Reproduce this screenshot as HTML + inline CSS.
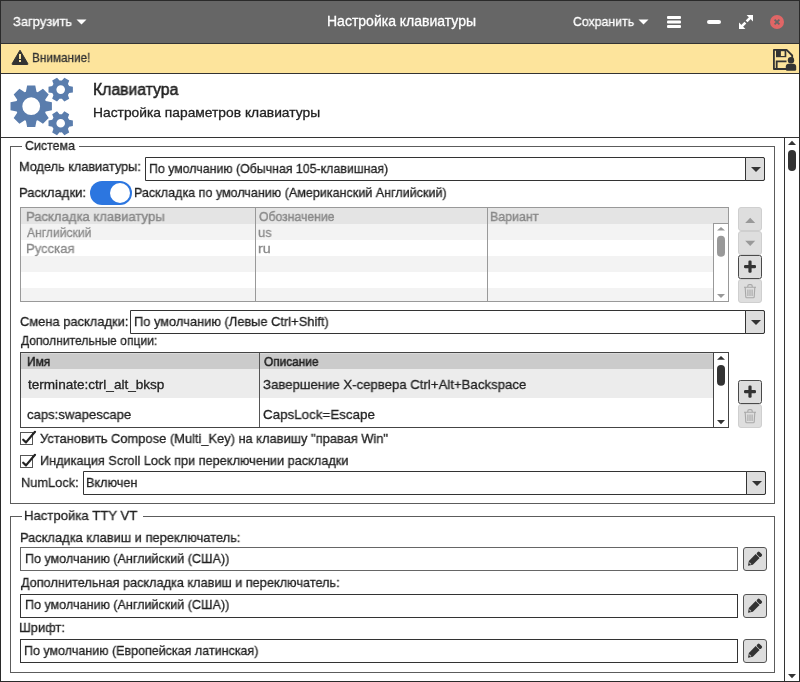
<!DOCTYPE html>
<html><head><meta charset="utf-8"><title>Настройка клавиатуры</title>
<style>
html,body{margin:0;padding:0;}
body{width:800px;height:682px;position:relative;overflow:hidden;background:#fff;font-family:"Liberation Sans",sans-serif;}
body>div,body>svg{position:absolute;}
.t{white-space:pre;line-height:20px;transform-origin:0 0;-webkit-text-stroke:0.3px currentColor;will-change:transform;}
</style></head><body>
<div style="left:0px;top:0px;width:800px;height:43px;background:#666;"></div>
<div style="left:0px;top:43px;width:800px;height:1px;background:#333;"></div>
<div style="left:0px;top:44px;width:800px;height:29px;background:#fde49c;"></div>
<div style="left:0px;top:73px;width:800px;height:1px;background:#333;"></div>
<div style="left:0px;top:137px;width:800px;height:1px;background:#333;"></div>
<svg style="left:0px;top:0px" width="800" height="44" viewBox="0 0 800 44">
<path d="M76.5,19.5h10l-5,5z" fill="#fff"/>
<path d="M638.5,19.5h10l-5,5z" fill="#fff"/>
<rect x="667" y="16" width="14" height="3" rx="1" fill="#fff"/>
<rect x="667" y="20.5" width="14" height="3" rx="1" fill="#fff"/>
<rect x="667" y="25" width="14" height="3" rx="1" fill="#fff"/>
<rect x="707" y="20" width="14" height="4" rx="2" fill="#fff"/>
<path d="M746.6,15H753V21.4Z" fill="#fff"/>
<path d="M739,22.6V29H745.4Z" fill="#fff"/>
<path d="M750.6,17.4L746.6,21.4M741.4,26.6L745.4,22.6" stroke="#fff" stroke-width="2.6"/>
<circle cx="777" cy="22" r="7" fill="#e06666"/>
<path d="M774.6,19.6l4.8,4.8M779.4,19.6l-4.8,4.8" stroke="#666" stroke-width="1.8"/>
</svg>
<svg style="left:0px;top:44px" width="800" height="30" viewBox="0 44 800 30">
<path d="M20,50.2L27.8,63.6Q28.3,64.5 27.3,64.5H12.7Q11.7,64.5 12.2,63.6Z" fill="#333" stroke="#333" stroke-width="1" stroke-linejoin="round"/>
<rect x="19" y="54" width="2" height="5" fill="#fde49c"/>
<rect x="19" y="60" width="2" height="2" fill="#fde49c"/>
<path d="M786,69H773.9V49.9H786.6L792.2,55.5V59" fill="none" stroke="#333" stroke-width="1.8" stroke-linejoin="round"/>
<path d="M776,50h10.3v7.2h-10.3z" fill="#333"/>
<rect x="780.9" y="51.2" width="3.7" height="4.8" fill="#fde49c"/>
<path d="M776.7,69V61.3H786.5" fill="none" stroke="#333" stroke-width="1.8"/>
<circle cx="791" cy="60.3" r="3.2" fill="#333"/>
<path d="M785.8,69.2V66.6Q785.8,63.7 788.8,63.7H793Q796.2,63.7 796.2,66.6V69.2Q796.2,70.7 794.7,70.7H787.3Q785.8,70.7 785.8,69.2Z" fill="#333"/>
</svg>
<svg style="left:0px;top:74px" width="90" height="63" viewBox="0 74 90 63">
<path fill="#5a7dad" fill-rule="evenodd" d="M25.91,91.74L27.13,85.50L35.27,85.50L36.49,91.74A15.4,15.4 0 0,1 37.69,92.23L42.96,88.68L48.72,94.44L45.17,99.71A15.4,15.4 0 0,1 45.66,100.91L51.90,102.13L51.90,110.27L45.66,111.49A15.4,15.4 0 0,1 45.17,112.69L48.72,117.96L42.96,123.72L37.69,120.17A15.4,15.4 0 0,1 36.49,120.66L35.27,126.90L27.13,126.90L25.91,120.66A15.4,15.4 0 0,1 24.71,120.17L19.44,123.72L13.68,117.96L17.23,112.69A15.4,15.4 0 0,1 16.74,111.49L10.50,110.27L10.50,102.13L16.74,100.91A15.4,15.4 0 0,1 17.23,99.71L13.68,94.44L19.44,88.68L24.71,92.23A15.4,15.4 0 0,1 25.91,91.74ZM40.10,106.20A8.9,8.9 0 1,0 22.30,106.20A8.9,8.9 0 1,0 40.10,106.20Z"/>
<path fill="#5a7dad" fill-rule="evenodd" d="M69.10,86.09L72.89,86.82L72.89,92.38L69.10,93.11A9.1,9.1 0 0,1 67.94,95.12L69.20,98.77L64.39,101.54L61.86,98.63A9.1,9.1 0 0,1 59.54,98.63L57.01,101.54L52.20,98.77L53.46,95.12A9.1,9.1 0 0,1 52.30,93.11L48.51,92.38L48.51,86.82L52.30,86.09A9.1,9.1 0 0,1 53.46,84.08L52.20,80.43L57.01,77.66L59.54,80.57A9.1,9.1 0 0,1 61.86,80.57L64.39,77.66L69.20,80.43L67.94,84.08A9.1,9.1 0 0,1 69.10,86.09ZM65.00,89.60A4.3,4.3 0 1,0 56.40,89.60A4.3,4.3 0 1,0 65.00,89.60Z"/>
<path fill="#5a7dad" fill-rule="evenodd" d="M69.10,119.79L72.89,120.52L72.89,126.08L69.10,126.81A9.1,9.1 0 0,1 67.94,128.82L69.20,132.47L64.39,135.24L61.86,132.33A9.1,9.1 0 0,1 59.54,132.33L57.01,135.24L52.20,132.47L53.46,128.82A9.1,9.1 0 0,1 52.30,126.81L48.51,126.08L48.51,120.52L52.30,119.79A9.1,9.1 0 0,1 53.46,117.78L52.20,114.13L57.01,111.36L59.54,114.27A9.1,9.1 0 0,1 61.86,114.27L64.39,111.36L69.20,114.13L67.94,117.78A9.1,9.1 0 0,1 69.10,119.79ZM65.00,123.30A4.3,4.3 0 1,0 56.40,123.30A4.3,4.3 0 1,0 65.00,123.30Z"/>
</svg>
<div style="left:784px;top:138px;width:1px;height:543px;background:#333;"></div>
<svg style="left:784px;top:138px" width="16" height="544" viewBox="784 138 16 544">
<path d="M788,145h8l-4,-4.2z" fill="#333"/>
<rect x="788" y="150" width="8" height="21" rx="4" fill="#333"/>
<path d="M788,674h8l-4,4.2z" fill="#333"/>
</svg>
<div style="left:10px;top:146px;width:1px;height:358px;background:#5c5c5c;"></div>
<div style="left:774px;top:146px;width:1px;height:358px;background:#5c5c5c;"></div>
<div style="left:10px;top:503px;width:765px;height:1px;background:#5c5c5c;"></div>
<div style="left:10px;top:146px;width:12px;height:1px;background:#5c5c5c;"></div>
<div style="left:79px;top:146px;width:696px;height:1px;background:#5c5c5c;"></div>
<div style="left:10px;top:516px;width:1px;height:157px;background:#5c5c5c;"></div>
<div style="left:774px;top:516px;width:1px;height:157px;background:#5c5c5c;"></div>
<div style="left:10px;top:672px;width:765px;height:1px;background:#5c5c5c;"></div>
<div style="left:10px;top:516px;width:12px;height:1px;background:#5c5c5c;"></div>
<div style="left:143px;top:516px;width:632px;height:1px;background:#5c5c5c;"></div>
<div style="left:145px;top:157px;width:620px;height:24px;box-sizing:border-box;border:1px solid #333;background:#fff;border-radius:0 2px 2px 0;"></div>
<div style="left:745px;top:157px;width:20px;height:24px;box-sizing:border-box;border:1px solid #333;background:#ddd;border-radius:0 2px 2px 0;"></div>
<svg style="left:751px;top:167px" width="10" height="5" viewBox="0 0 10 5"><path d="M0,0h10l-5,5z" fill="#333"/></svg>
<div style="left:130px;top:310px;width:635px;height:24px;box-sizing:border-box;border:1px solid #333;background:#fff;border-radius:0 2px 2px 0;"></div>
<div style="left:745px;top:310px;width:20px;height:24px;box-sizing:border-box;border:1px solid #333;background:#ddd;border-radius:0 2px 2px 0;"></div>
<svg style="left:751px;top:320px" width="10" height="5" viewBox="0 0 10 5"><path d="M0,0h10l-5,5z" fill="#333"/></svg>
<div style="left:83px;top:471px;width:683px;height:24px;box-sizing:border-box;border:1px solid #333;background:#fff;border-radius:0 2px 2px 0;"></div>
<div style="left:746px;top:471px;width:20px;height:24px;box-sizing:border-box;border:1px solid #333;background:#ddd;border-radius:0 2px 2px 0;"></div>
<svg style="left:752px;top:481px" width="10" height="5" viewBox="0 0 10 5"><path d="M0,0h10l-5,5z" fill="#333"/></svg>
<div style="left:90px;top:181px;width:42px;height:24px;background:#2c76e0;border-radius:12px;"></div>
<div style="left:110px;top:183px;width:20px;height:20px;background:#fff;border-radius:10px;"></div>
<div style="left:20px;top:207px;width:709px;height:95px;box-sizing:border-box;border:1px solid #999;background:#fff;"></div>
<div style="left:21px;top:208px;width:692px;height:16px;background:#e4e4e4;"></div>
<div style="left:21px;top:224px;width:692px;height:16px;background:#f3f3f3;"></div>
<div style="left:21px;top:256px;width:692px;height:16px;background:#f3f3f3;"></div>
<div style="left:21px;top:288px;width:692px;height:13px;background:#f3f3f3;"></div>
<div style="left:713px;top:208px;width:15px;height:16px;background:#e4e4e4;"></div>
<div style="left:255px;top:208px;width:1px;height:93px;background:#999;"></div>
<div style="left:487px;top:208px;width:1px;height:93px;background:#999;"></div>
<div style="left:713px;top:224px;width:1px;height:77px;background:#999;"></div>
<div style="left:714px;top:224px;width:14px;height:77px;background:#fff;"></div>
<div style="left:713px;top:223px;width:15px;height:1px;background:#999;"></div>
<svg style="left:713px;top:223px" width="15" height="78" viewBox="713 223 15 78">
<path d="M717,230.6h8l-4,-3.6z" fill="#999"/>
<rect x="717" y="235.8" width="8" height="21" rx="4" fill="#999"/>
<path d="M717,294h8l-4,3.9z" fill="#999"/>
</svg>
<div style="left:738px;top:207px;width:24px;height:24px;box-sizing:border-box;border:1px solid #cfcfcf;background:#dedede;border-radius:3px;"></div>
<div style="left:738px;top:231px;width:24px;height:24px;box-sizing:border-box;border:1px solid #cfcfcf;background:#dedede;border-radius:3px;"></div>
<div style="left:738px;top:255px;width:24px;height:24px;box-sizing:border-box;border:1px solid #4a4a4a;background:#ddd;border-radius:2.5px;"></div>
<div style="left:738px;top:279px;width:24px;height:24px;box-sizing:border-box;border:1px solid #cfcfcf;background:#dedede;border-radius:3px;"></div>
<svg style="left:738px;top:207px" width="24" height="96" viewBox="738 207 24 96">
<path d="M745.2,223h10l-5,-5.2z" fill="#999"/>
<path d="M745.2,240.7h10l-5,5.2z" fill="#999"/>
<rect x="744" y="265" width="12" height="3.2" rx="1.2" fill="#333"/>
<rect x="748.4" y="260.5" width="3.2" height="12.2" rx="1.2" fill="#333"/>
<g fill="none" stroke="#a8a8a8" stroke-width="1.1">
<path d="M744,287.2h12 M747.8,287v-1q0,-1.4 1.4,-1.4h1.6q1.4,0 1.4,1.4v1 M745.2,287.5l0.6,9.5q0.1,0.8 0.9,0.8h6.6q0.8,0 0.9,-0.8l0.6,-9.5 M747.9,289.5v6.5 M750,289.5v6.5 M752.1,289.5v6.5"/>
</g>
</svg>
<div style="left:20px;top:352px;width:709px;height:76px;box-sizing:border-box;border:1px solid #444;background:#fff;"></div>
<div style="left:21px;top:353px;width:692px;height:16px;background:#cbcbcb;"></div>
<div style="left:21px;top:353px;width:692px;height:1px;background:#d9d9d9;"></div>
<div style="left:21px;top:369px;width:692px;height:29px;background:#ececec;"></div>
<div style="left:259px;top:353px;width:1px;height:74px;background:#555;"></div>
<div style="left:713px;top:353px;width:1px;height:74px;background:#444;"></div>
<svg style="left:713px;top:352px" width="16" height="76" viewBox="713 352 16 76">
<path d="M717,359.8h8l-4,-3.8z" fill="#333"/>
<rect x="717" y="364.9" width="8" height="20.8" rx="4" fill="#333"/>
<path d="M717,420h8l-4,4.2z" fill="#333"/>
</svg>
<div style="left:738px;top:380px;width:24px;height:24px;box-sizing:border-box;border:1px solid #4a4a4a;background:#ddd;border-radius:2.5px;"></div>
<div style="left:738px;top:404px;width:24px;height:24px;box-sizing:border-box;border:1px solid #cfcfcf;background:#dedede;border-radius:3px;"></div>
<svg style="left:738px;top:380px" width="24" height="48" viewBox="738 380 24 48">
<rect x="744" y="390" width="12" height="3.2" rx="1.2" fill="#333"/>
<rect x="748.4" y="385.5" width="3.2" height="12.2" rx="1.2" fill="#333"/>
<g fill="none" stroke="#a8a8a8" stroke-width="1.1">
<path d="M744,412.2h12 M747.8,412v-1q0,-1.4 1.4,-1.4h1.6q1.4,0 1.4,1.4v1 M745.2,412.5l0.6,9.5q0.1,0.8 0.9,0.8h6.6q0.8,0 0.9,-0.8l0.6,-9.5 M747.9,414.5v6.5 M750,414.5v6.5 M752.1,414.5v6.5"/>
</g>
</svg>
<div style="left:20px;top:432px;width:13px;height:13px;box-sizing:border-box;border:1.5px solid #555;background:#fff;"></div>
<svg style="left:17px;top:428px" width="24" height="20" viewBox="17 428 24 20">
<path d="M23.2,439.7L26,442.4L35,431.8" fill="none" stroke="#222" stroke-width="2.2" stroke-linecap="round" stroke-linejoin="round"/>
</svg>
<div style="left:20px;top:455px;width:13px;height:13px;box-sizing:border-box;border:1.5px solid #555;background:#fff;"></div>
<svg style="left:17px;top:451px" width="24" height="20" viewBox="17 451 24 20">
<path d="M23.2,462.7L26,465.4L35,454.8" fill="none" stroke="#222" stroke-width="2.2" stroke-linecap="round" stroke-linejoin="round"/>
</svg>
<div style="left:20px;top:547px;width:718px;height:24px;box-sizing:border-box;border:1px solid #666;background:#fff;"></div>
<div style="left:743px;top:547px;width:24px;height:24px;box-sizing:border-box;border:1px solid #555;background:#ddd;border-radius:3px;"></div>
<svg style="left:743px;top:547px" width="24" height="24" viewBox="0 0 24 24">
<g transform="rotate(-45 5 18.7)">
<path d="M5,18.7 L9,15.9 H18.6 V21.5 H9 Z" fill="#333"/>
<rect x="19.3" y="15.9" width="3.6" height="5.6" rx="1.3" fill="#333"/>
<path d="M8.1,17.4 V20" stroke="#bbb" stroke-width="1"/>
</g>
</svg>
<div style="left:20px;top:594px;width:718px;height:24px;box-sizing:border-box;border:1px solid #333;background:#fff;"></div>
<div style="left:743px;top:594px;width:24px;height:24px;box-sizing:border-box;border:1px solid #555;background:#ddd;border-radius:3px;"></div>
<svg style="left:743px;top:594px" width="24" height="24" viewBox="0 0 24 24">
<g transform="rotate(-45 5 18.7)">
<path d="M5,18.7 L9,15.9 H18.6 V21.5 H9 Z" fill="#333"/>
<rect x="19.3" y="15.9" width="3.6" height="5.6" rx="1.3" fill="#333"/>
<path d="M8.1,17.4 V20" stroke="#bbb" stroke-width="1"/>
</g>
</svg>
<div style="left:20px;top:639px;width:718px;height:24px;box-sizing:border-box;border:1px solid #333;background:#fff;"></div>
<div style="left:743px;top:639px;width:24px;height:24px;box-sizing:border-box;border:1px solid #555;background:#ddd;border-radius:3px;"></div>
<svg style="left:743px;top:639px" width="24" height="24" viewBox="0 0 24 24">
<g transform="rotate(-45 5 18.7)">
<path d="M5,18.7 L9,15.9 H18.6 V21.5 H9 Z" fill="#333"/>
<rect x="19.3" y="15.9" width="3.6" height="5.6" rx="1.3" fill="#333"/>
<path d="M8.1,17.4 V20" stroke="#bbb" stroke-width="1"/>
</g>
</svg>
<div class="t" style="left:13.04px;top:12.0px;font-size:13.5px;color:#fff;transform:scaleX(0.9583);">Загрузить</div>
<div class="t" style="left:326.60px;top:11.0px;font-size:14px;color:#fff;transform:scaleX(0.9986);">Настройка клавиатуры</div>
<div class="t" style="left:573.39px;top:12.0px;font-size:13.5px;color:#fff;transform:scaleX(0.9121);">Сохранить</div>
<div class="t" style="left:31.73px;top:48.0px;font-size:13.5px;color:#333;transform:scaleX(0.8708);">Внимание!</div>
<div class="t" style="left:93.02px;top:80.0px;font-size:16px;color:#222;transform:scaleX(0.9849);-webkit-text-stroke:0.5px #222;">Клавиатура</div>
<div class="t" style="left:92.98px;top:103.0px;font-size:13.5px;color:#222;transform:scaleX(1.0227);">Настройка параметров клавиатуры</div>
<div class="t" style="left:24.68px;top:136.0px;font-size:13.5px;color:#222;transform:scaleX(0.9208);">Система</div>
<div class="t" style="left:19.46px;top:157.0px;font-size:13.5px;color:#222;transform:scaleX(0.9409);">Модель клавиатуры:</div>
<div class="t" style="left:148.58px;top:159.0px;font-size:13.5px;color:#222;transform:scaleX(0.9154);">По умолчанию (Обычная 105-клавишная)</div>
<div class="t" style="left:19.43px;top:183.0px;font-size:13.5px;color:#222;transform:scaleX(0.9672);">Раскладки:</div>
<div class="t" style="left:133.87px;top:183.0px;font-size:13.5px;color:#222;transform:scaleX(0.9290);">Раскладка по умолчанию (Американский Английский)</div>
<div class="t" style="left:26.13px;top:207.0px;font-size:13.5px;color:#8a8a8a;transform:scaleX(0.9683);-webkit-text-stroke:0.45px #8a8a8a;">Раскладка клавиатуры</div>
<div class="t" style="left:259.40px;top:207.0px;font-size:13.5px;color:#8a8a8a;transform:scaleX(0.9036);-webkit-text-stroke:0.45px #8a8a8a;">Обозначение</div>
<div class="t" style="left:490.48px;top:207.0px;font-size:13.5px;color:#8a8a8a;transform:scaleX(0.9192);-webkit-text-stroke:0.45px #8a8a8a;">Вариант</div>
<div class="t" style="left:27.10px;top:223.0px;font-size:13.5px;color:#8a8a8a;transform:scaleX(0.8972);">Английский</div>
<div class="t" style="left:258.44px;top:223.0px;font-size:13.5px;color:#8a8a8a;transform:scaleX(0.9615);">us</div>
<div class="t" style="left:26.13px;top:239.0px;font-size:13.5px;color:#8a8a8a;transform:scaleX(0.9688);">Русская</div>
<div class="t" style="left:258.34px;top:239.0px;font-size:13.5px;color:#8a8a8a;transform:scaleX(1.0600);">ru</div>
<div class="t" style="left:19.65px;top:312.0px;font-size:13.5px;color:#222;transform:scaleX(0.9550);">Смена раскладки:</div>
<div class="t" style="left:133.55px;top:312.0px;font-size:13.5px;color:#222;transform:scaleX(0.9522);">По умолчанию (Левые Ctrl+Shift)</div>
<div class="t" style="left:20.60px;top:331.0px;font-size:13.5px;color:#222;transform:scaleX(0.8967);">Дополнительные опции:</div>
<div class="t" style="left:26.62px;top:352.0px;font-size:13.5px;color:#222;transform:scaleX(0.8800);-webkit-text-stroke:0.5px #222;">Имя</div>
<div class="t" style="left:263.50px;top:352.0px;font-size:13.5px;color:#222;transform:scaleX(0.8790);-webkit-text-stroke:0.5px #222;">Описание</div>
<div class="t" style="left:27.90px;top:375.0px;font-size:13.5px;color:#222;transform:scaleX(1.0044);">terminate:ctrl_alt_bksp</div>
<div class="t" style="left:262.72px;top:375.0px;font-size:13.5px;color:#222;transform:scaleX(0.9769);">Завершение X-сервера Ctrl+Alt+Backspace</div>
<div class="t" style="left:26.93px;top:405.0px;font-size:13.5px;color:#222;transform:scaleX(0.9717);">caps:swapescape</div>
<div class="t" style="left:262.71px;top:405.0px;font-size:13.5px;color:#222;transform:scaleX(0.9902);">CapsLock=Escape</div>
<div class="t" style="left:39.95px;top:429.0px;font-size:13.5px;color:#222;transform:scaleX(0.9533);">Установить Compose (Multi_Key) на клавишу "правая Win"</div>
<div class="t" style="left:39.96px;top:451.0px;font-size:13.5px;color:#222;transform:scaleX(0.9417);">Индикация Scroll Lock при переключении раскладки</div>
<div class="t" style="left:21.25px;top:473.0px;font-size:13.5px;color:#222;transform:scaleX(0.9492);">NumLock:</div>
<div class="t" style="left:86.26px;top:473.0px;font-size:13.5px;color:#222;transform:scaleX(0.9396);">Включен</div>
<div class="t" style="left:24.13px;top:506.0px;font-size:13.5px;color:#222;transform:scaleX(0.9722);">Настройка TTY VT</div>
<div class="t" style="left:19.65px;top:528.0px;font-size:13.5px;color:#222;transform:scaleX(0.9533);">Раскладка клавиш и переключатель:</div>
<div class="t" style="left:24.57px;top:549.0px;font-size:13.5px;color:#222;transform:scaleX(0.9298);">По умолчанию (Английский (США))</div>
<div class="t" style="left:20.60px;top:573.0px;font-size:13.5px;color:#222;transform:scaleX(0.9415);">Дополнительная раскладка клавиш и переключатель:</div>
<div class="t" style="left:24.57px;top:595.0px;font-size:13.5px;color:#222;transform:scaleX(0.9298);">По умолчанию (Английский (США))</div>
<div class="t" style="left:18.95px;top:618.0px;font-size:13.5px;color:#222;transform:scaleX(0.9522);">Шрифт:</div>
<div class="t" style="left:24.47px;top:641.0px;font-size:13.5px;color:#222;transform:scaleX(0.9258);">По умолчанию (Европейская латинская)</div>
<div style="left:0px;top:0px;width:800px;height:682px;box-sizing:border-box;border:1px solid #2a2a2a;"></div>
</body></html>
